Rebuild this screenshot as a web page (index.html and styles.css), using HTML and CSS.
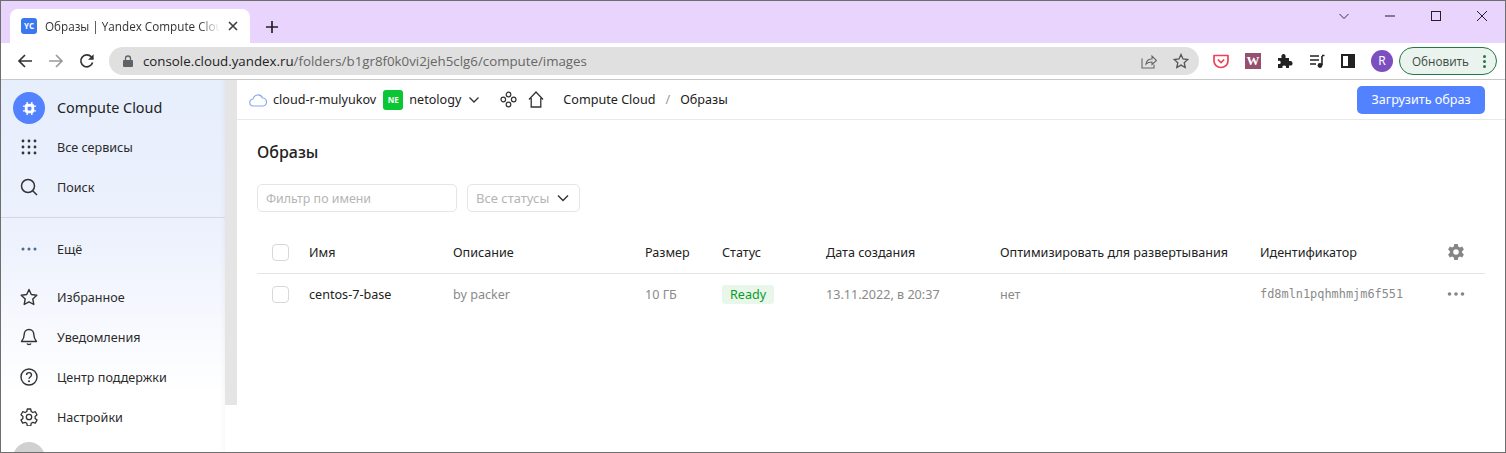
FILE: index.html
```html
<!DOCTYPE html>
<html lang="ru">
<head>
    <meta charset="UTF-8">
    <title>Образы | Yandex Compute Cloud</title>
    <link rel="stylesheet" href="styles.css">
</head>
<body>
    <!-- browser chrome -->
    <div class="tabstrip">
        <div class="tab">
            <span class="favicon">YC</span>
            <span class="tab-title">Образы | Yandex Compute Cloud</span>
            <svg class="tab-close" width="10" height="10" viewBox="0 0 10 10"><path d="M1 1l8 8M9 1l-8 8" stroke="#3c3c3c" stroke-width="1.6" fill="none"/></svg>
        </div>
        <svg class="new-tab" width="14" height="14" viewBox="0 0 14 14"><path d="M7 1v12M1 7h12" stroke="#222" stroke-width="1.7" fill="none"/></svg>
        <div class="win-btns">
            <svg width="12" height="12" viewBox="0 0 12 12"><path d="M1.5 4l4.5 4.5L10.5 4" stroke="#333" fill="none"/></svg>
            <svg width="12" height="12" viewBox="0 0 12 12"><path d="M1 6h10" stroke="#222" fill="none"/></svg>
            <svg width="12" height="12" viewBox="0 0 12 12"><rect x="1.5" y="1.5" width="9" height="9" stroke="#222" fill="none"/></svg>
            <svg width="12" height="12" viewBox="0 0 12 12"><path d="M1 1l10 10M11 1L1 11" stroke="#222" fill="none"/></svg>
        </div>
    </div>

    <div class="toolbar">
        <svg class="nav-icon" width="16" height="16" viewBox="0 0 16 16"><path d="M15 8H2M8 2L2 8l6 6" stroke="#333" stroke-width="1.7" fill="none"/></svg>
        <svg class="nav-icon" width="16" height="16" viewBox="0 0 16 16"><path d="M1 8h13M8 2l6 6-6 6" stroke="#9a9a9a" stroke-width="1.7" fill="none"/></svg>
        <svg class="nav-icon" width="16" height="16" viewBox="0 0 16 16"><path d="M13.6 9.5A6 6 0 1 1 12.3 3.8L14 5.5" stroke="#333" stroke-width="1.7" fill="none"/><path d="M14.6 1.2v5.6H9z" fill="#333"/></svg>
        <div class="omnibox">
            <svg width="10" height="12" viewBox="0 0 10 12"><path d="M2.5 5V3.5a2.5 2.5 0 0 1 5 0V5" stroke="#5f6368" stroke-width="1.3" fill="none"/><rect y="5" width="10" height="7" rx="1" fill="#5f6368"/></svg>
            <span class="url"><b>console.cloud.yandex.ru</b>/folders/b1gr8f0k0vi2jeh5clg6/compute/images</span>
            <svg class="omni-share" width="16" height="16" viewBox="0 0 16 16"><path d="M1 5.500V15h12v-3.500M5 11c.5-3.500 3-5 6-5V3l4.500 4.500L11 11.500V9c-2.500 0-4.500.5-6 2z" stroke="#666" stroke-width="1.100" fill="none"/></svg>
            <svg width="16" height="16" viewBox="0 0 16 16"><path d="M8 1.500l2 4.500 4.800.5-3.600 3.200 1 4.800L8 12.100l-4.200 2.400 1-4.800L1.200 6.500 6 6z" stroke="#555" stroke-width="1.300" fill="none"/></svg>
        </div>
        <div class="ext-icons">
            <svg width="16" height="16" viewBox="0 0 16 16"><path d="M1 2.500h14V8a7 6.500 0 0 1-14 0z" stroke="#ef4056" stroke-width="1.700" fill="none" stroke-linejoin="round"/><path d="M4.800 6.500L8 9.500l3.200-3" stroke="#ef4056" stroke-width="1.700" fill="none"/></svg>
            <span class="ext-w">W</span>
            <svg width="16" height="16" viewBox="0 0 16 16"><path d="M1 5h3.500c-.5-3 .5-4 2-4s2.500 1 2 4H12v3c3-.5 3.500.8 3.500 2.200S15 13 12 12.500V15H9c.4-2-.5-2.600-1.800-2.600S5 13 5.500 15H1v-4c2 .4 2.700-.5 2.700-1.600S3 7.500 1 8z" fill="#222"/></svg>
            <svg width="16" height="16" viewBox="0 0 16 16"><path d="M1 3h9M1 7h9M1 11h6" stroke="#222" stroke-width="1.500" fill="none"/><path d="M13 3v9" stroke="#222" stroke-width="1.600" fill="none"/><path d="M13 2.500h2.500" stroke="#222" stroke-width="1.500"/><circle cx="11" cy="12.500" r="2.400" fill="#222"/></svg>
            <svg width="14" height="14" viewBox="0 0 14 14"><rect x="1" y="1" width="12" height="12" stroke="#222" stroke-width="2" fill="none"/><rect x="7" y="1" width="6" height="12" fill="#222"/></svg>
            <span class="profile">R</span>
        </div>
        <div class="update-btn">
            <span>Обновить</span>
            <span class="update-dots"><i></i><i></i><i></i></span>
        </div>
    </div>

    <!-- console -->
    <div class="app">
        <div class="sidebar">
            <div class="side-logo">
                <span class="logo-circle">
                    <svg width="15" height="15" viewBox="0 0 16 16"><path d="M5.500 1v14M10.500 1v14M1 5.500h14M1 10.500h14" stroke="#fff" stroke-width="1.500"/><rect x="3" y="3" width="10" height="10" rx="2.500" fill="#fff"/><rect x="6" y="6" width="4" height="4" rx="1" fill="#5282ff"/></svg>
                </span>
                <span class="logo-title">Compute Cloud</span>
            </div>
            <div class="side-item">
                <svg class="side-icon" width="18" height="18" viewBox="0 0 18 18" fill="#333"><circle cx="3" cy="3" r="1.400"/><circle cx="9" cy="3" r="1.400"/><circle cx="15" cy="3" r="1.400"/><circle cx="3" cy="9" r="1.400"/><circle cx="9" cy="9" r="1.400"/><circle cx="15" cy="9" r="1.400"/><circle cx="3" cy="15" r="1.400"/><circle cx="9" cy="15" r="1.400"/><circle cx="15" cy="15" r="1.400"/></svg>
                <span>Все сервисы</span>
            </div>
            <div class="side-item">
                <svg class="side-icon" width="18" height="18" viewBox="0 0 18 18"><circle cx="8" cy="8" r="6.500" stroke="#333" stroke-width="1.500" fill="none"/><path d="M12.700 12.700L17 17" stroke="#333" stroke-width="1.500" fill="none"/></svg>
                <span>Поиск</span>
            </div>
            <div class="side-sep"></div>
            <div class="side-item">
                <svg class="side-icon" width="18" height="18" viewBox="0 0 18 18" fill="#4d6a8f"><circle cx="3" cy="9" r="1.500"/><circle cx="9" cy="9" r="1.500"/><circle cx="15" cy="9" r="1.500"/></svg>
                <span>Ещё</span>
            </div>
            <div class="side-group">
                <div class="side-item">
                    <svg class="side-icon" width="18" height="18" viewBox="0 0 18 18"><path d="M9 1.500l2.300 5 5.500.7-4 3.800 1 5.500L9 13.800l-4.800 2.700 1-5.500-4-3.800 5.500-.7z" stroke="#333" stroke-width="1.400" fill="none" stroke-linejoin="round"/></svg>
                    <span>Избранное</span>
                </div>
                <div class="side-item">
                    <svg class="side-icon" width="18" height="18" viewBox="0 0 18 18"><path d="M9 1.500c-3 0-4.800 2.300-4.800 5 0 3.500-1 5-2.700 7h15c-1.700-2-2.700-3.500-2.700-7 0-2.700-1.800-5-4.800-5z" stroke="#333" stroke-width="1.400" fill="none" stroke-linejoin="round"/><path d="M7 15.500c.5 1.300 3.500 1.300 4 0" stroke="#333" stroke-width="1.400" fill="none"/></svg>
                    <span>Уведомления</span>
                </div>
                <div class="side-item">
                    <svg class="side-icon" width="18" height="18" viewBox="0 0 18 18"><circle cx="9" cy="9" r="8" stroke="#333" stroke-width="1.400" fill="none"/><path d="M6.500 7c0-3.200 5-3.200 5 0 0 2-2.500 2-2.500 3.800" stroke="#333" stroke-width="1.400" fill="none"/><circle cx="9" cy="13.300" r="1" fill="#333"/></svg>
                    <span>Центр поддержки</span>
                </div>
                <div class="side-item">
                    <svg class="side-icon" width="18" height="18" viewBox="0 0 18 18"><path d="M7.300 1h3.400l.5 2.500 1.700 1 2.400-.8 1.700 3-1.900 1.700v2l1.900 1.700-1.700 3-2.400-.8-1.700 1-.5 2.500H7.300l-.5-2.500-1.700-1-2.400.8-1.700-3 1.900-1.700v-2L1 6.700l1.700-3 2.400.8 1.700-1z" stroke="#333" stroke-width="1.300" fill="none" stroke-linejoin="round"/><circle cx="9" cy="9" r="2.700" stroke="#333" stroke-width="1.300" fill="none"/></svg>
                    <span>Настройки</span>
                </div>
            </div>
            <div class="side-avatar"></div>
        </div>
        <div class="gutter"><div class="gutter-thumb"></div></div>

        <div class="main">
            <div class="topbar">
                <svg width="18" height="14" viewBox="0 0 18 14"><path d="M4.500 13a3.500 3.500 0 0 1-.5-7 5 5 0 0 1 9.500-1A4 4 0 0 1 13.500 13z" stroke="#8aa9ee" stroke-width="1.200" fill="none"/></svg>
                <span class="cloud-name">cloud-r-mulyukov</span>
                <span class="folder-badge">NE</span>
                <span class="folder-name">netology</span>
                <svg class="chev" width="12" height="8" viewBox="0 0 12 8"><path d="M1.500 1.500l4.500 4.500 4.500-4.500" stroke="#333" stroke-width="1.300" fill="none"/></svg>
                <svg class="crumb-icon" width="17" height="17" viewBox="0 0 17 17"><g stroke="#333" stroke-width="1.200" fill="none"><circle cx="8.500" cy="3.500" r="2.300"/><circle cx="3.300" cy="8.500" r="2.300"/><circle cx="13.700" cy="8.500" r="2.300"/><circle cx="8.500" cy="13.500" r="2.300"/></g></svg>
                <svg class="home-icon" width="16" height="17" viewBox="0 0 16 17"><path d="M1 8.500L8 1l7 7.500M3.200 7v9h9.600V7" stroke="#333" stroke-width="1.300" fill="none"/></svg>
                <span class="crumb">Compute Cloud</span>
                <span class="crumb-sep">/</span>
                <span class="crumb-current">Образы</span>
                <span class="upload-btn">Загрузить образ</span>
            </div>

            <div class="content">
                <h1 class="page-title">Образы</h1>
                <div class="filters">
                    <div class="filter-input">Фильтр по имени</div>
                    <div class="filter-select">
                        <span>Все статусы</span>
                        <svg width="12" height="8" viewBox="0 0 12 8"><path d="M1 1.500l5 5 5-5" stroke="#333" stroke-width="1.400" fill="none"/></svg>
                    </div>
                </div>

                <div class="grid-table grid-head">
                    <div class="cell-check"><span class="checkbox"></span></div>
                    <div>Имя</div>
                    <div>Описание</div>
                    <div>Размер</div>
                    <div>Статус</div>
                    <div>Дата создания</div>
                    <div>Оптимизировать для развертывания</div>
                    <div>Идентификатор</div>
                    <div class="cell-end">
                        <svg width="18" height="18" viewBox="0 0 18 18"><path fill="#858585" fill-rule="evenodd" d="M7.300 1h3.400l.5 2.400 1.700 1 2.300-.8 1.700 3-1.800 1.600v1.600l1.800 1.600-1.700 3-2.300-.8-1.700 1-.5 2.400H7.300l-.5-2.400-1.700-1-2.300.8-1.700-3 1.800-1.600V8.200L1.100 6.600l1.700-3 2.300.8 1.700-1zM9 6.200a2.800 2.800 0 1 0 0 5.600 2.800 2.800 0 0 0 0-5.600z"/></svg>
                    </div>
                </div>
                <div class="grid-table grid-row">
                    <div class="cell-check"><span class="checkbox"></span></div>
                    <div class="cell-name">centos-7-base</div>
                    <div>by packer</div>
                    <div>10 ГБ</div>
                    <div><span class="status-ready">Ready</span></div>
                    <div>13.11.2022, в 20:37</div>
                    <div>нет</div>
                    <div class="cell-id">fd8mln1pqhmhmjm6f551</div>
                    <div class="cell-end">
                        <svg width="18" height="6" viewBox="0 0 18 6" fill="#858585"><circle cx="2.500" cy="3" r="1.800"/><circle cx="9" cy="3" r="1.800"/><circle cx="15.500" cy="3" r="1.800"/></svg>
                    </div>
                </div>
            </div>
        </div>
    </div>
</body>
</html>
```

FILE: styles.css
```css
html, body {
    margin: 0;
    height: 100%;
}

body {
    box-sizing: border-box;
    height: 453px;
    overflow: hidden;
    border: 1px solid #6e6e6e;
    background-color: #fff;
    color: #222;
    font-family: 'Noto Sans', sans-serif;
    font-size: 12.6px;
    display: flex;
    flex-direction: column;
}

/* browser chrome */
.tabstrip {
    height: 42px;
    flex: none;
    background-color: #e8d4fd;
    display: flex;
    align-items: flex-end;
    padding-left: 9px;
}

.tab {
    width: 240px;
    height: 34px;
    box-sizing: border-box;
    background-color: #fff;
    border-radius: 8px 8px 0 0;
    display: flex;
    align-items: center;
    padding: 0 12px 0 11px;
    font-family: 'Open Sans', sans-serif;
    font-size: 11.7px;
    color: #333;
}

.favicon {
    width: 16px;
    height: 16px;
    flex: none;
    background-color: #3a77f0;
    border-radius: 3px;
    color: #fff;
    font-size: 8px;
    font-weight: 700;
    line-height: 16px;
    text-align: center;
}

.tab-title {
    flex: 1;
    margin-left: 8px;
    white-space: nowrap;
    overflow: hidden;
    -webkit-mask-image: linear-gradient(to right, #000 88%, transparent 100%);
    mask-image: linear-gradient(to right, #000 88%, transparent 100%);
}

.tab-close {
    flex: none;
    margin-left: 8px;
}

.new-tab {
    align-self: center;
    margin: 9px 0 0 15px;
}

.win-btns {
    margin-left: auto;
    align-self: flex-start;
    display: flex;
    gap: 34px;
    padding: 9px 17px 0 0;
}

.toolbar {
    height: 37px;
    flex: none;
    box-sizing: border-box;
    border-bottom: 1px solid #c9c9c9;
    display: flex;
    align-items: center;
    padding-left: 16px;
}

.nav-icon {
    flex: none;
    margin-right: 15px;
}

.omnibox {
    width: 1090px;
    height: 28px;
    flex: none;
    box-sizing: border-box;
    margin-left: -1px;
    background-color: #e0e0e0;
    border-radius: 14px;
    display: flex;
    align-items: center;
    padding: 0 10px 0 14px;
}

.url {
    margin-left: 10px;
    flex: 1;
    font-family: 'Open Sans', sans-serif;
    font-size: 13.3px;
    color: #666;
    white-space: nowrap;
}

.url b {
    font-weight: 400;
    color: #222;
}

.omni-share {
    margin-right: 16px;
}

.ext-icons {
    display: flex;
    align-items: center;
    gap: 16px;
    margin-left: 14px;
}

.ext-w {
    width: 16px;
    height: 16px;
    background-color: #96506f;
    color: #fff;
    font-family: 'Liberation Serif', serif;
    font-size: 13px;
    font-weight: 700;
    line-height: 16px;
    text-align: center;
}

.profile {
    width: 22px;
    height: 22px;
    border-radius: 50%;
    background-color: #7b4fc0;
    color: #fff;
    font-size: 12px;
    line-height: 22px;
    text-align: center;
}

.update-btn {
    width: 98px;
    height: 28px;
    box-sizing: border-box;
    margin-left: 6px;
    border: 1px solid #1f7a45;
    border-radius: 14px;
    background-color: #eaf3ee;
    display: flex;
    align-items: center;
    justify-content: space-between;
    padding: 0 10px 0 12px;
    font-family: 'Open Sans', sans-serif;
    font-size: 11.7px;
    color: #3c4a40;
}

.update-dots {
    display: flex;
    flex-direction: column;
    gap: 2px;
}

.update-dots i {
    width: 3px;
    height: 3px;
    border-radius: 50%;
    background-color: #1f7a45;
}

/* console */
.app {
    flex: 1;
    display: flex;
    min-height: 0;
}

.sidebar {
    width: 224px;
    flex: none;
    overflow: hidden;
    background: linear-gradient(to bottom, #e7eefc 0%, #ecf1fd 40%, #fff 85%);
    box-shadow: inset -6px 0 6px -6px rgba(0, 0, 0, 0.06);
}

.side-logo {
    height: 47px;
    box-sizing: border-box;
    display: flex;
    align-items: flex-start;
    padding: 12px 0 0 12px;
}

.logo-circle {
    width: 32px;
    height: 32px;
    flex: none;
    border-radius: 50%;
    background-color: #5282ff;
    display: flex;
    align-items: center;
    justify-content: center;
}

.logo-title {
    margin-left: 12px;
    font-size: 14.400px;
    line-height: 32px;
    color: #222;
}

.side-item {
    height: 40px;
    display: flex;
    align-items: center;
    padding-left: 19px;
    color: #2b2b2b;
}

.side-icon {
    flex: none;
    margin-right: 19px;
}

.side-sep {
    height: 1px;
    margin: 10px 0 11px;
    background-color: #d3d8e2;
}

.side-group {
    margin-top: 8px;
}

.side-avatar {
    width: 32px;
    height: 32px;
    margin: 5px 0 0 12px;
    border-radius: 50%;
    background-color: #d0d0d0;
}

.gutter {
    width: 12px;
    flex: none;
}

.gutter-thumb {
    height: 325px;
    background-color: #e5e5e5;
}

.main {
    flex: 1;
    min-width: 0;
}

.topbar {
    height: 40px;
    box-sizing: border-box;
    border-bottom: 1px solid #e8e8e8;
    display: flex;
    align-items: center;
    padding: 0 20px 0 12px;
    color: #222;
}

.cloud-name {
    margin-left: 6px;
}

.folder-badge {
    width: 20px;
    height: 20px;
    margin-left: 7px;
    border-radius: 3px;
    background-color: #0ac634;
    color: #fff;
    font-size: 8px;
    font-weight: 700;
    line-height: 20px;
    text-align: center;
}

.folder-name {
    margin-left: 6px;
}

.chev {
    margin-left: 7px;
}

.crumb-icon {
    margin-left: 20px;
}

.home-icon {
    margin-left: 11px;
}

.crumb {
    margin-left: 19px;
}

.crumb-sep {
    margin: 0 10px;
    color: #999;
}

.upload-btn {
    margin-left: auto;
    width: 128px;
    height: 28px;
    border-radius: 5px;
    background-color: #5282ff;
    color: #fff;
    line-height: 28px;
    text-align: center;
}

.content {
    padding: 0 20px;
}

.page-title {
    margin: 21px 0 0;
    height: 22px;
    font-size: 16px;
    line-height: 22px;
    font-weight: 500;
    color: #222;
}

.filters {
    display: flex;
    gap: 10px;
    margin-top: 21px;
}

.filter-input, .filter-select {
    height: 28px;
    box-sizing: border-box;
    border: 1px solid #e5e5e5;
    border-radius: 5px;
    color: #b5b5b5;
    line-height: 27px;
}

.filter-input {
    width: 200px;
    padding-left: 8px;
    font-size: 12.400px;
}

.filter-select {
    width: 113px;
    padding: 0 10px 0 8px;
    font-size: 13px;
    display: flex;
    align-items: center;
    justify-content: space-between;
}

.grid-table {
    display: grid;
    grid-template-columns: 52px 144px 192px 77px 104px 174px 260px 1fr 40px;
    align-items: center;
}

.grid-head {
    height: 44px;
    margin-top: 18px;
    padding-top: 1px;
    box-sizing: border-box;
    border-bottom: 1px solid #e5e5e5;
    color: #222;
}

.grid-row {
    height: 40px;
    padding-bottom: 2px;
    color: #8a8a8a;
}

.cell-check {
    padding-left: 15px;
    display: flex;
}

.checkbox {
    width: 15px;
    height: 15px;
    border: 1px solid #d8d8d8;
    border-radius: 4px;
}

.cell-name {
    color: #222;
}

.status-ready {
    display: inline-block;
    padding: 0 8px;
    height: 19px;
    line-height: 19px;
    border-radius: 3px;
    background-color: #e8f7ea;
    color: #0a9c2b;
}

.cell-id {
    font-family: 'DejaVu Sans Mono', monospace;
    font-size: 11.900px;
}

.cell-end {
    display: flex;
    padding-left: 2px;
}
```
